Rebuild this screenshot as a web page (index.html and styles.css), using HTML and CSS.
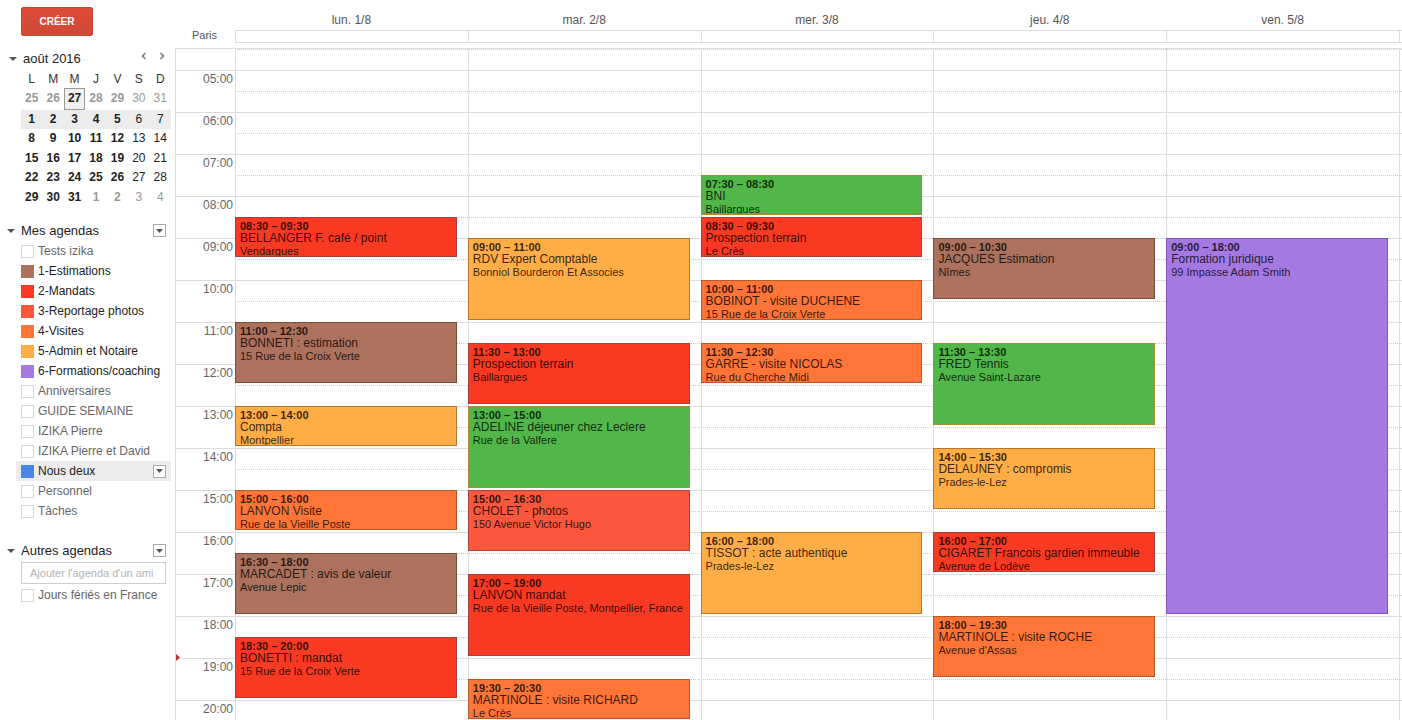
FILE: index.html
```html
<!DOCTYPE html>
<html lang="fr">
<head>
<meta charset="utf-8">
<title>Agenda – août 2016</title>
<link rel="stylesheet" href="styles.css">
</head>
<body>
<div class="app">
  <aside class="sidebar">
    <button class="create" type="button">CRÉER</button>

    <section class="mini">
      <div class="mini-head">
        <svg class="caret" viewBox="0 0 8 4" aria-hidden="true"><path d="M0 0h8L4 4z"/></svg>
        <h2>août 2016</h2>
        <button class="nav" type="button" aria-label="Mois précédent"><svg viewBox="0 0 6 8"><path d="M4.500 1L1.500 4l3 3"/></svg></button>
        <button class="nav" type="button" aria-label="Mois suivant"><svg viewBox="0 0 6 8"><path d="M1.500 1l3 3-3 3"/></svg></button>
      </div>
      <table class="month">
        <thead><tr><th>L</th><th>M</th><th>M</th><th>J</th><th>V</th><th>S</th><th>D</th></tr></thead>
        <tbody>
          <tr class="out"><td class="busy">25</td><td class="busy">26</td><td class="today">27</td><td class="busy">28</td><td class="busy">29</td><td>30</td><td>31</td></tr>
          <tr class="week"><td class="busy">1</td><td class="busy">2</td><td class="busy">3</td><td class="busy">4</td><td class="busy">5</td><td>6</td><td>7</td></tr>
          <tr><td class="busy">8</td><td class="busy">9</td><td class="busy">10</td><td class="busy">11</td><td class="busy">12</td><td>13</td><td>14</td></tr>
          <tr><td class="busy">15</td><td class="busy">16</td><td class="busy">17</td><td class="busy">18</td><td class="busy">19</td><td>20</td><td>21</td></tr>
          <tr><td class="busy">22</td><td class="busy">23</td><td class="busy">24</td><td class="busy">25</td><td class="busy">26</td><td>27</td><td>28</td></tr>
          <tr><td class="busy">29</td><td class="busy">30</td><td class="busy">31</td><td class="next busy">1</td><td class="next busy">2</td><td class="next">3</td><td class="next">4</td></tr>
        </tbody>
      </table>
    </section>

    <section class="group">
      <div class="group-head">
        <svg class="caret" viewBox="0 0 8 4" aria-hidden="true"><path d="M0 0h8L4 4z"/></svg>
        <h2>Mes agendas</h2>
        <button class="menu" type="button" aria-label="Options de mes agendas"><svg viewBox="0 0 7 4"><path d="M0 0h7L3.500 4z"/></svg></button>
      </div>
      <ul class="list">
        <li><label><input type="checkbox">Tests izika</label></li>
        <li><label><input type="checkbox" class="brown" checked>1-Estimations</label></li>
        <li><label><input type="checkbox" class="red" checked>2-Mandats</label></li>
        <li><label><input type="checkbox" class="coral" checked>3-Reportage photos</label></li>
        <li><label><input type="checkbox" class="orange" checked>4-Visites</label></li>
        <li><label><input type="checkbox" class="amber" checked>5-Admin et Notaire</label></li>
        <li><label><input type="checkbox" class="purple" checked>6-Formations/coaching</label></li>
        <li><label><input type="checkbox">Anniversaires</label></li>
        <li><label><input type="checkbox">GUIDE SEMAINE</label></li>
        <li><label><input type="checkbox">IZIKA Pierre</label></li>
        <li><label><input type="checkbox">IZIKA Pierre et David</label></li>
        <li class="active"><label><input type="checkbox" class="blue" checked>Nous deux</label><button class="menu" type="button" aria-label="Options de Nous deux"><svg viewBox="0 0 7 4"><path d="M0 0h7L3.500 4z"/></svg></button></li>
        <li><label><input type="checkbox">Personnel</label></li>
        <li><label><input type="checkbox">Tâches</label></li>
      </ul>
    </section>

    <section class="group">
      <div class="group-head">
        <svg class="caret" viewBox="0 0 8 4" aria-hidden="true"><path d="M0 0h8L4 4z"/></svg>
        <h2>Autres agendas</h2>
        <button class="menu" type="button" aria-label="Options des autres agendas"><svg viewBox="0 0 7 4"><path d="M0 0h7L3.500 4z"/></svg></button>
      </div>
      <input class="friend" type="text" placeholder="Ajouter l'agenda d'un ami" aria-label="Ajouter l'agenda d'un ami">
      <ul class="list">
        <li><label><input type="checkbox">Jours fériés en France</label></li>
      </ul>
    </section>
  </aside>

  <main class="calendar">
    <header class="head">
      <span class="zone">Paris</span>
      <div class="cols names"><span>lun. 1/8</span><span>mar. 2/8</span><span>mer. 3/8</span><span>jeu. 4/8</span><span>ven. 5/8</span></div>
      <div class="cols allday"><i></i><i></i><i></i><i></i><i></i><i></i></div>
    </header>

    <div class="board">
      <div class="hours">
        <div class="half first"></div>
        <div class="hour"><span>05:00</span><div class="half"></div></div>
        <div class="hour"><span>06:00</span><div class="half"></div></div>
        <div class="hour"><span>07:00</span><div class="half"></div></div>
        <div class="hour"><span>08:00</span><div class="half"></div></div>
        <div class="hour"><span>09:00</span><div class="half"></div></div>
        <div class="hour"><span>10:00</span><div class="half"></div></div>
        <div class="hour"><span>11:00</span><div class="half"></div></div>
        <div class="hour"><span>12:00</span><div class="half"></div></div>
        <div class="hour"><span>13:00</span><div class="half"></div></div>
        <div class="hour"><span>14:00</span><div class="half"></div></div>
        <div class="hour"><span>15:00</span><div class="half"></div></div>
        <div class="hour"><span>16:00</span><div class="half"></div></div>
        <div class="hour"><span>17:00</span><div class="half"></div></div>
        <div class="hour"><span>18:00</span><div class="half"></div></div>
        <div class="hour"><span>19:00</span><div class="half"></div></div>
        <div class="hour"><span>20:00</span><div class="half"></div></div>
      </div>

      <div class="cols days">
        <div class="day">
          <article class="event red" style="grid-row: 9 / 11"><time>08:30 – 09:30</time><h3>BELLANGER F. café / point</h3><p>Vendargues</p></article>
          <article class="event brown" style="grid-row: 14 / 17"><time>11:00 – 12:30</time><h3>BONNETI : estimation</h3><p>15 Rue de la Croix Verte</p></article>
          <article class="event amber" style="grid-row: 18 / 20"><time>13:00 – 14:00</time><h3>Compta</h3><p>Montpellier</p></article>
          <article class="event orange" style="grid-row: 22 / 24"><time>15:00 – 16:00</time><h3>LANVON Visite</h3><p>Rue de la Vieille Poste</p></article>
          <article class="event brown" style="grid-row: 25 / 28"><time>16:30 – 18:00</time><h3>MARCADET : avis de valeur</h3><p>Avenue Lepic</p></article>
          <article class="event red" style="grid-row: 29 / 32"><time>18:30 – 20:00</time><h3>BONETTI : mandat</h3><p>15 Rue de la Croix Verte</p></article>
        </div>
        <div class="day">
          <article class="event amber" style="grid-row: 10 / 14"><time>09:00 – 11:00</time><h3>RDV Expert Comptable</h3><p>Bonniol Bourderon Et Associes</p></article>
          <article class="event red" style="grid-row: 15 / 18"><time>11:30 – 13:00</time><h3>Prospection terrain</h3><p>Baillargues</p></article>
          <article class="event green" style="grid-row: 18 / 22"><time>13:00 – 15:00</time><h3>ADELINE déjeuner chez Leclere</h3><p>Rue de la Valfere</p></article>
          <article class="event coral" style="grid-row: 22 / 25"><time>15:00 – 16:30</time><h3>CHOLET - photos</h3><p>150 Avenue Victor Hugo</p></article>
          <article class="event red" style="grid-row: 26 / 30"><time>17:00 – 19:00</time><h3>LANVON mandat</h3><p>Rue de la Vieille Poste, Montpellier, France</p></article>
          <article class="event orange" style="grid-row: 31 / 33"><time>19:30 – 20:30</time><h3>MARTINOLE : visite RICHARD</h3><p>Le Crès</p></article>
        </div>
        <div class="day">
          <article class="event green" style="grid-row: 7 / 9"><time>07:30 – 08:30</time><h3>BNI</h3><p>Baillargues</p></article>
          <article class="event red" style="grid-row: 9 / 11"><time>08:30 – 09:30</time><h3>Prospection terrain</h3><p>Le Crès</p></article>
          <article class="event orange" style="grid-row: 12 / 14"><time>10:00 – 11:00</time><h3>BOBINOT - visite DUCHENE</h3><p>15 Rue de la Croix Verte</p></article>
          <article class="event orange" style="grid-row: 15 / 17"><time>11:30 – 12:30</time><h3>GARRE - visite NICOLAS</h3><p>Rue du Cherche Midi</p></article>
          <article class="event amber" style="grid-row: 24 / 28"><time>16:00 – 18:00</time><h3>TISSOT : acte authentique</h3><p>Prades-le-Lez</p></article>
        </div>
        <div class="day">
          <article class="event brown" style="grid-row: 10 / 13"><time>09:00 – 10:30</time><h3>JACQUES Estimation</h3><p>Nîmes</p></article>
          <article class="event green" style="grid-row: 15 / 19"><time>11:30 – 13:30</time><h3>FRED Tennis</h3><p>Avenue Saint-Lazare</p></article>
          <article class="event amber" style="grid-row: 20 / 23"><time>14:00 – 15:30</time><h3>DELAUNEY : compromis</h3><p>Prades-le-Lez</p></article>
          <article class="event red" style="grid-row: 24 / 26"><time>16:00 – 17:00</time><h3>CIGARET Francois gardien immeuble</h3><p>Avenue de Lodève</p></article>
          <article class="event orange" style="grid-row: 28 / 31"><time>18:00 – 19:30</time><h3>MARTINOLE : visite ROCHE</h3><p>Avenue d'Assas</p></article>
        </div>
        <div class="day">
          <article class="event purple" style="grid-row: 10 / 28"><time>09:00 – 18:00</time><h3>Formation juridique</h3><p>99 Impasse Adam Smith</p></article>
        </div>
        <div class="day"></div>
      </div>
      <svg class="now" viewBox="0 0 5 9" aria-hidden="true"><path d="M0 0v9l5-4.500z"/></svg>
    </div>
  </main>
</div>
</body>
</html>
```
FILE: styles.css
```css
* { box-sizing: border-box; }

body {
  margin: 0;
  background: #fff;
  color: #222;
  font: 12px/20px "Liberation Sans", Arial, sans-serif;
}

h2, h3, p, ul { margin: 0; padding: 0; font-weight: normal; }
ul { list-style: none; }
button { padding: 0; font-family: inherit; cursor: pointer; }

.app {
  display: grid;
  grid-template-columns: 175px minmax(0, 1fr);
  height: 100vh;
  overflow: hidden;
}

/* Sidebar */
.sidebar { padding: 7px 4px 0 7px; }

.create {
  display: block;
  width: 72px;
  height: 29px;
  margin-left: 14px;
  border: 1px solid #d04432;
  border-radius: 2px;
  background: linear-gradient(#dd4b39, #d14836);
  color: #fff;
  font-size: 10px;
  font-weight: bold;
}

.mini { margin-top: 13px; }
.mini-head { display: flex; align-items: center; height: 20px; padding-left: 2px; }
.mini-head h2 { flex: 1; padding-left: 6px; font-size: 13px; }
.caret { width: 8px; height: 4px; fill: #555; }

.nav {
  width: 18px;
  height: 18px;
  margin-bottom: 6px;
  border: 0;
  background: none;
  line-height: 0;
}
.nav svg { width: 6px; height: 8px; fill: none; stroke: #777; stroke-width: 1.500; }

.month {
  width: 150px;
  height: 136px;
  margin: 2px 0 0 14px;
  border-spacing: 0;
  table-layout: fixed;
  line-height: 17px;
  text-align: center;
}
.month th { padding: 0; color: #333; font-weight: normal; }
.month td { padding: 0; }
.month .busy { font-weight: bold; }
.month .out td, .month .next { color: #999; }
.month .week { background: #ececec; }
.month .out .today {
  border: 1px solid #999;
  background: #f0f0f0;
  color: #222;
  font-weight: bold;
}

.group { margin-top: 13px; }
.group + .group { margin-top: 19px; }
.group-head { display: flex; align-items: center; height: 21px; padding-right: 5px; }
.group-head h2 { flex: 1; padding-left: 6px; font-size: 13px; }

.menu {
  display: grid;
  place-items: center;
  width: 13px;
  height: 13px;
  border: 1px solid #aaa;
  background: #fff;
}
.menu svg { width: 7px; height: 4px; fill: #555; }

.list li { display: flex; align-items: center; height: 20px; padding: 0 5px 0 14px; }
.list label {
  display: flex;
  flex: 1;
  align-items: center;
  gap: 4px;
  color: #666;
  white-space: nowrap;
}
.list label:has(:checked) { color: #222; }
.list .active { margin-left: 9px; padding-left: 5px; background: #ececec; }

.list input {
  flex: none;
  width: 13px;
  height: 13px;
  margin: 0;
  border: 1px solid #d8d8d8;
  background: #fff;
  appearance: none;
}

.friend {
  display: block;
  width: 145px;
  height: 22px;
  margin: 1px 0 1px 14px;
  padding: 0 8px;
  border: 1px solid #ccc;
  font: 11px "Liberation Sans", Arial, sans-serif;
}
.friend::placeholder { color: #b4b4b4; opacity: 1; }

/* Calendar */
.calendar { display: flex; flex-direction: column; min-height: 0; }

.cols { display: grid; grid-template-columns: repeat(5, minmax(0, 1fr)) 3px; }

.head {
  display: grid;
  grid-template-columns: 60px minmax(0, 1fr);
  padding-bottom: 5px;
  color: #555;
}
.zone {
  grid-row: 1 / 3;
  align-self: end;
  padding-right: 18px;
  font-size: 11px;
  line-height: 16px;
  text-align: right;
}
.names { padding-top: 10px; text-align: center; }
.allday { height: 13px; border: solid #ddd; border-width: 1px 0; }
.allday i { border-left: 1px solid #ddd; }

.board {
  position: relative;
  display: grid;
  flex: 1;
  grid-template-columns: 59px minmax(0, 1fr);
  min-height: 0;
  overflow: hidden;
  border: solid #ddd;
  border-width: 1px 0 0 1px;
}
.hours { grid-area: 1 / 1 / 2 / 3; }
.hour {
  display: grid;
  grid-template-columns: 59px minmax(0, 1fr);
  height: 42px;
  border-top: 1px solid #ddd;
}
.hour span {
  padding-right: 2px;
  color: #666;
  line-height: 16px;
  text-align: right;
}
.half { height: 21px; margin-top: 20px; border-top: 1px dotted #ccc; }
.half.first { margin: 0 0 0 59px; }

.days { grid-area: 1 / 2; }
.day {
  display: grid;
  grid-template-columns: minmax(0, 1fr);
  grid-auto-rows: 21px;
  grid-template-rows: repeat(33, 21px);
  border-left: 1px solid #ddd;
}

.event {
  margin: 0 11px 2px -1px;
  padding: 2px 4px 0;
  overflow: hidden;
  border: 1px solid;
  color: rgba(0, 0, 0, .8);
  white-space: nowrap;
}
.event time { display: block; font-size: 11px; font-weight: bold; line-height: 12px; }
.event h3 { font-size: 12px; line-height: 13px; }
.event p { font-size: 11px; line-height: 12px; }

.now {
  position: absolute;
  top: 604px;
  left: 0;
  width: 4px;
  height: 9px;
  fill: #b5333b;
}

/* Agenda colours */
.event.brown, .list .brown { background: #ac725e; border-color: #7a4a3a; }
.event.red, .list .red { background: #f83a22; border-color: #a9403a; }
.event.coral, .list .coral { background: #fa573c; border-color: #b0403c; }
.event.orange, .list .orange { background: #ff7537; border-color: #b5592a; }
.event.amber, .list .amber { background: #ffad46; border-color: #b5762c; }
.event.green, .list .green { background: #51b749; border-color: #a98a2c; }
.event.purple, .list .purple { background: #a47ae2; border-color: #8a4fc0; }
.list .blue { background: #4986e7; border-color: #4986e7; }
.list input:checked { border-color: transparent; background-clip: border-box; }
```
